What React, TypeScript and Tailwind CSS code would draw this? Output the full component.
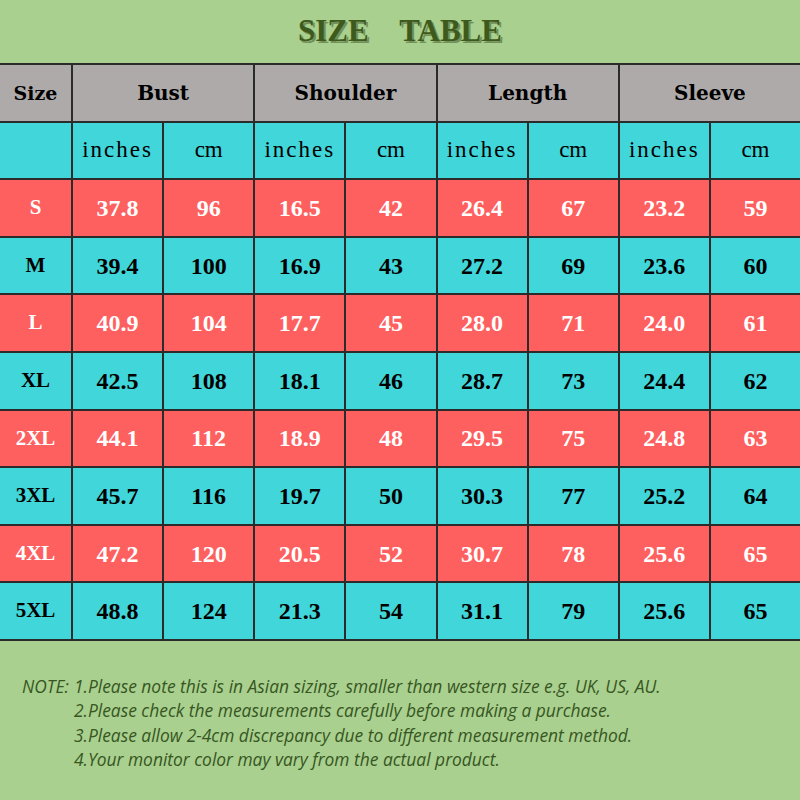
import React from "react";

const rows: [string, string[]][] = [
  ["S", ["37.8", "96", "16.5", "42", "26.4", "67", "23.2", "59"]],
  ["M", ["39.4", "100", "16.9", "43", "27.2", "69", "23.6", "60"]],
  ["L", ["40.9", "104", "17.7", "45", "28.0", "71", "24.0", "61"]],
  ["XL", ["42.5", "108", "18.1", "46", "28.7", "73", "24.4", "62"]],
  ["2XL", ["44.1", "112", "18.9", "48", "29.5", "75", "24.8", "63"]],
  ["3XL", ["45.7", "116", "19.7", "50", "30.3", "77", "25.2", "64"]],
  ["4XL", ["47.2", "120", "20.5", "52", "30.7", "78", "25.6", "65"]],
  ["5XL", ["48.8", "124", "21.3", "54", "31.1", "79", "25.6", "65"]],
];

const serif = { fontFamily: '"Liberation Serif", "DejaVu Serif", serif' };
const heavy = { fontFamily: '"DejaVu Serif", "Liberation Serif", serif' };

export default function App() {
  return (
    <div className="w-[800px] h-[800px] bg-[#a9d08e] overflow-hidden">
      <div className="h-[63px] flex items-center justify-center">
        <div
          className="text-[31px] font-bold text-[#3d5a1c] whitespace-pre"
          style={{ ...serif, textShadow: "2px 2px 0 #72915a" }}
        >
          SIZE{"    "}TABLE
        </div>
      </div>
      <div
        className="grid grid-cols-[71px_repeat(8,1fr)] auto-rows-[55.6px] gap-[2px] bg-[#2b2b2b] border-y-2 border-[#2b2b2b]"
        style={serif}
      >
        <div className="bg-[#aeaaaa] flex items-center justify-center text-[19px] font-bold text-black" style={heavy}>Size</div>
        {["Bust", "Shoulder", "Length", "Sleeve"].map((h) => (
          <div key={h} className="col-span-2 bg-[#aeaaaa] flex items-center justify-center text-[20px] font-bold text-black" style={heavy}>
            {h}
          </div>
        ))}
        <div className="bg-[#41d6da]" />
        {Array.from({ length: 4 }).flatMap((_, i) => [
          <div key={"i" + i} className="bg-[#41d6da] flex items-center justify-center text-[23px] text-black tracking-[2px]">inches</div>,
          <div key={"c" + i} className="bg-[#41d6da] flex items-center justify-center text-[23px] text-black">cm</div>,
        ])}
        {rows.map(([s, vals], ri) => {
          const red = ri % 2 === 0;
          const cls = red ? "bg-[#fe6060] text-white" : "bg-[#41d6da] text-black";
          return (
            <React.Fragment key={s}>
              <div className={`${cls} flex items-center justify-center text-[21px] font-bold`}>{s}</div>
              {vals.map((v, vi) => (
                <div key={vi} className={`${cls} flex items-center justify-center text-[24px] font-bold`}>{v}</div>
              ))}
            </React.Fragment>
          );
        })}
      </div>
      <div
        className="pt-[33px] pl-[22px] text-[17.4px] italic font-medium text-[#375623] leading-[24.5px]"
        style={{ fontFamily: '"Open Sans", "Noto Sans", sans-serif' }}
      >
        <div className="flex">
          <span className="w-[52px]">NOTE:</span>
          <span>1.Please note this is in Asian sizing, smaller than western size e.g. UK, US, AU.</span>
        </div>
        <div className="pl-[52px]">2.Please check the measurements carefully before making a purchase.</div>
        <div className="pl-[52px]">3.Please allow 2-4cm discrepancy due to different measurement method.</div>
        <div className="pl-[52px]">4.Your monitor color may vary from the actual product.</div>
      </div>
    </div>
  );
}
